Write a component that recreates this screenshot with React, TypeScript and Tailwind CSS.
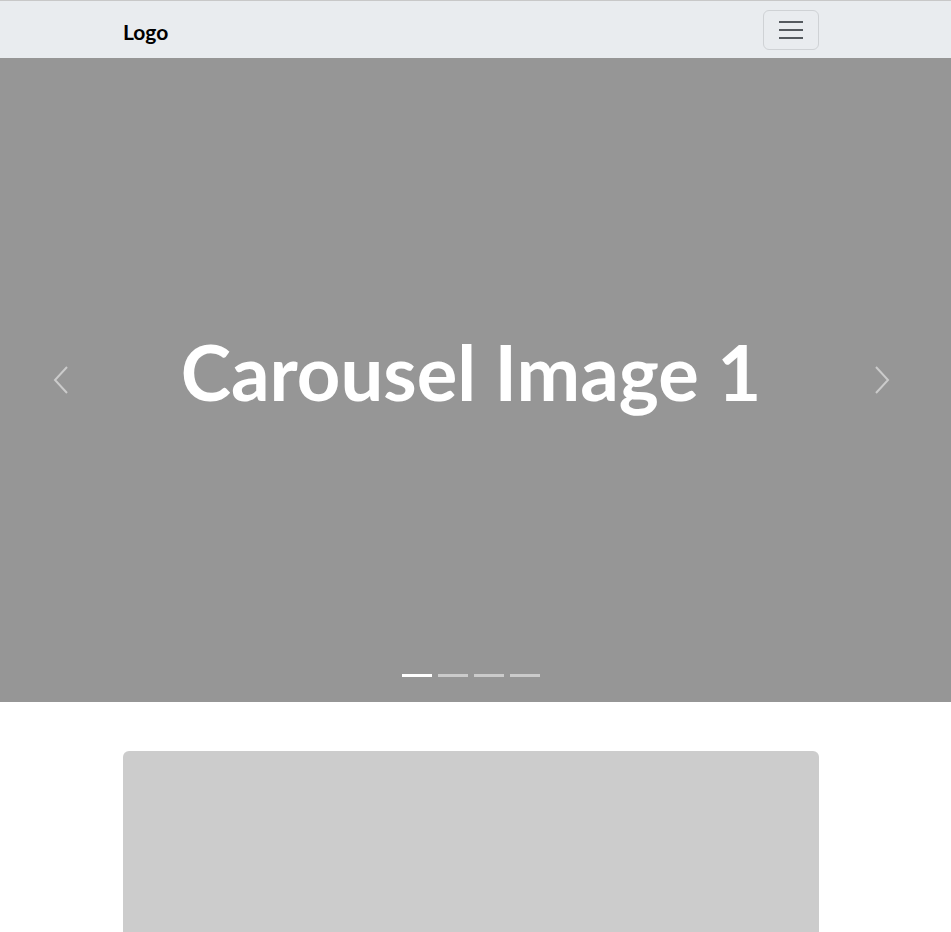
import React from "react";

const Chevron: React.FC<{ dir: "left" | "right" }> = ({ dir }) => (
  <svg width="16" height="28" viewBox="0 0 16 28" fill="none">
    <path
      d={dir === "left" ? "M14 1 L2 14 L14 27" : "M2 1 L14 14 L2 27"}
      stroke="rgba(255,255,255,0.5)"
      strokeWidth="2"
    />
  </svg>
);

const App: React.FC = () => {
  const slides = [1, 2, 3, 4];
  return (
    <div className="min-h-[932px] bg-white font-['Lato',sans-serif]">
      <nav className="border-t border-[#c8c8c8] bg-[#e9ecef] pt-[9px] pb-2">
        <div className="w-[942px]">
          <div className="mx-auto flex w-[720px] items-center justify-between px-3">
            <a className="pt-[4px] text-[21px] font-bold leading-[30px] text-black">Logo</a>
            <button className="flex h-10 w-14 flex-col items-center justify-center gap-[6px] rounded-md border border-[#cfd2d5]">
              <span className="h-[2px] w-6 bg-[#555a5f]"></span>
              <span className="h-[2px] w-6 bg-[#555a5f]"></span>
              <span className="h-[2px] w-6 bg-[#555a5f]"></span>
            </button>
          </div>
        </div>
      </nav>

      <section className="relative h-[644px] bg-[#969696]">
        <div className="flex h-full w-[942px] items-center justify-between">
          <div className="flex w-[121px] justify-center">
            <Chevron dir="left" />
          </div>
          <h1 className="pb-[16px] text-[76px] font-bold leading-none text-white">Carousel Image 1</h1>
          <div className="flex w-[121px] justify-center">
            <Chevron dir="right" />
          </div>
        </div>
        <div className="absolute bottom-[25px] left-0 flex w-[942px] justify-center gap-[6px]">
          {slides.map((i) => (
            <span
              key={i}
              className={i === 1 ? "h-[3px] w-[30px] bg-white" : "h-[3px] w-[30px] bg-white/50"}
            ></span>
          ))}
        </div>
      </section>

      <div className="w-[942px] pt-[49px]">
        <div className="mx-auto w-[720px] px-3">
          <div className="h-[300px] rounded-t-md bg-[#cccccc]"></div>
        </div>
      </div>
    </div>
  );
};

export default App;
